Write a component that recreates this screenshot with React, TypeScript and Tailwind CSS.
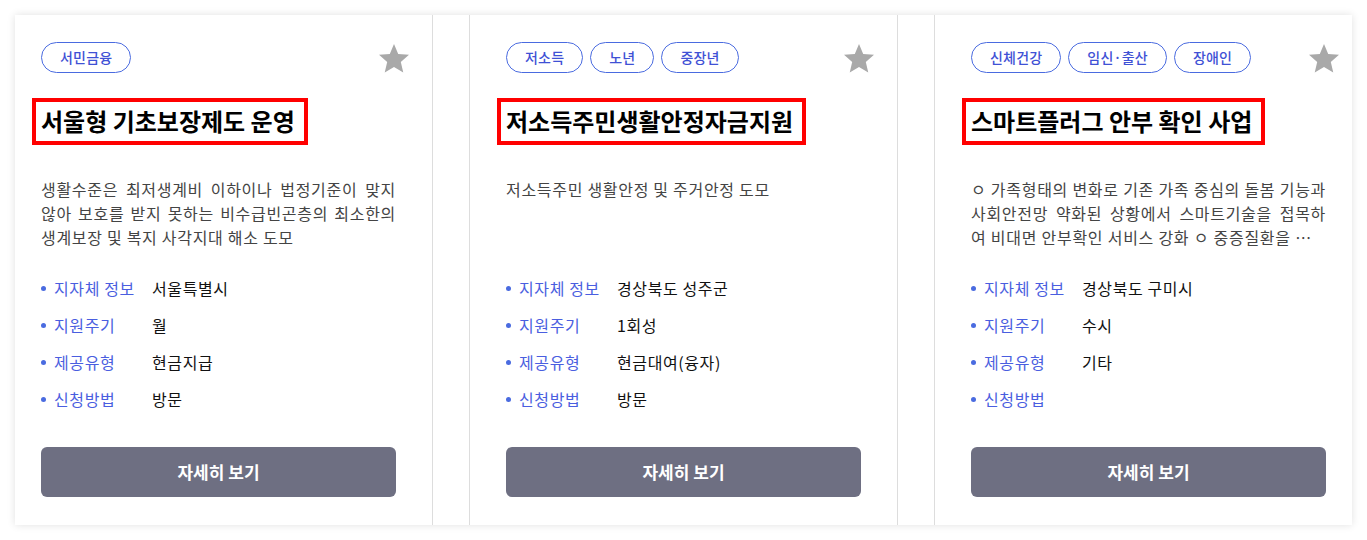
import React from 'react';
import { MdStar } from 'react-icons/md';

type Policy = {
    id: string;
    tags: string[];
    title: string;
    desc: string;
    info: { label: string; value: string }[];
};

const policies: Policy[] = [
    {
        id: 'p1',
        tags: ['서민금융'],
        title: '서울형 기초보장제도 운영',
        desc: '생활수준은 최저생계비 이하이나 법정기준이 맞지 않아 보호를 받지 못하는 비수급빈곤층의 최소한의 생계보장 및 복지 사각지대 해소 도모',
        info: [
            { label: '지자체 정보', value: '서울특별시' },
            { label: '지원주기', value: '월' },
            { label: '제공유형', value: '현금지급' },
            { label: '신청방법', value: '방문' },
        ],
    },
    {
        id: 'p2',
        tags: ['저소득', '노년', '중장년'],
        title: '저소득주민생활안정자금지원',
        desc: '저소득주민 생활안정 및 주거안정 도모',
        info: [
            { label: '지자체 정보', value: '경상북도 성주군' },
            { label: '지원주기', value: '1회성' },
            { label: '제공유형', value: '현금대여(융자)' },
            { label: '신청방법', value: '방문' },
        ],
    },
    {
        id: 'p3',
        tags: ['신체건강', '임신·출산', '장애인'],
        title: '스마트플러그 안부 확인 사업',
        desc: 'ㅇ 가족형태의 변화로 기존 가족 중심의 돌봄 기능과 사회안전망 약화된 상황에서 스마트기술을 접목하여 비대면 안부확인 서비스 강화 ㅇ 중증질환을 가진 독거노인 및 장애인 가구의 안전 확인',
        info: [
            { label: '지자체 정보', value: '경상북도 구미시' },
            { label: '지원주기', value: '수시' },
            { label: '제공유형', value: '기타' },
            { label: '신청방법', value: '' },
        ],
    },
];

const PolicyCard: React.FC<{ policy: Policy }> = ({ policy }) => (
    <div className="w-[429px] shrink-0 border-x border-[#dddddd] px-9 pt-[27px] pb-[28px] flex flex-col">
        {/* 태그 + 즐겨찾기 */}
        <div className="flex items-start justify-between h-[31px]">
            <div className="flex gap-[7px]">
                {policy.tags.map((tag) => (
                    <span
                        key={tag}
                        className="h-[31px] px-[18px] rounded-full border border-[#4a6be0] text-[#3f51d5] text-[14px] font-medium leading-[29px] tracking-[0.2px]"
                    >
                        {tag}
                    </span>
                ))}
            </div>
            <button className="-mt-[1px] -mr-[16px] text-[#a9a9a9]">
                <MdStar size={36} />
            </button>
        </div>

        {/* 제목 */}
        <div className="mt-[25px] -ml-[9px]">
            <h3 className="inline-block h-[47px] border-4 border-[#ff0000] pl-[5px] pr-[9px] text-[24px] font-bold text-black leading-[38px] whitespace-nowrap">
                {policy.title}
            </h3>
        </div>

        {/* 설명 */}
        <p className="mt-8 h-[72px] text-base leading-6 tracking-[0.7px] text-[#444444] text-justify line-clamp-3">
            {policy.desc}
        </p>

        {/* 정보 */}
        <ul className="mt-[27px] flex flex-col gap-[13px]">
            {policy.info.map((row) => (
                <li key={row.label} className="flex items-center h-6 text-base leading-6 tracking-[0.6px]">
                    <span className="w-[5px] h-[5px] rounded-full bg-[#4a6be0] mr-2 shrink-0" />
                    <span className="w-[98px] text-[#4a5ee0] shrink-0">{row.label}</span>
                    <span className="text-[#111111]">{row.value}</span>
                </li>
            ))}
        </ul>

        <button className="mt-[36px] h-[50px] w-full rounded-[6px] bg-[#6e6f82] text-white text-[17px] font-bold">
            자세히 보기
        </button>
    </div>
);

export default function App() {
    return (
        <div
            className="min-h-[540px] bg-white p-[15px]"
            style={{ fontFamily: '"Noto Sans CJK KR", "Noto Sans", sans-serif' }}
        >
            <div className="h-[510px] overflow-hidden bg-white shadow-[0_0_8px_rgba(0,0,0,0.12)]">
                <div className="flex gap-9 -ml-[11px]">
                    {policies.map((p) => (
                        <PolicyCard key={p.id} policy={p} />
                    ))}
                </div>
            </div>
        </div>
    );
}
